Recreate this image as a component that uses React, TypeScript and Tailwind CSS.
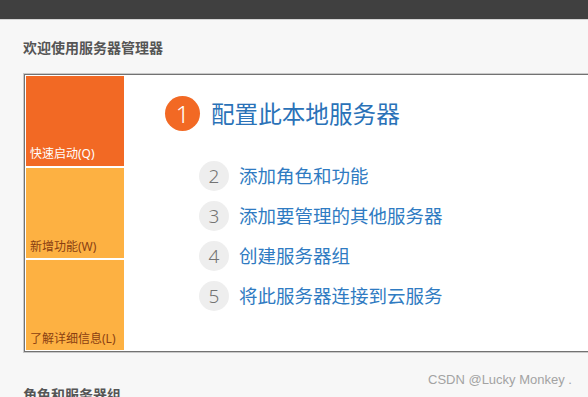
import React from "react";

const items = [
  { n: "2", t: "添加角色和功能" },
  { n: "3", t: "添加要管理的其他服务器" },
  { n: "4", t: "创建服务器组" },
  { n: "5", t: "将此服务器连接到云服务" },
];

export default function App() {
  return (
    <div
      className="relative w-[588px] h-[397px] overflow-hidden bg-[#f7f7f7]"
      style={{ fontFamily: '"Noto Sans", "Noto Sans CJK SC", sans-serif' }}
    >
      <div className="h-[20px] bg-[#404040] border-b border-[#d4d4d4]" />
      <div className="pl-[23px]">
        <h1 className="mt-[18px] h-[20px] leading-[20px] text-[14px] font-bold text-[#555555]">
          欢迎使用服务器管理器
        </h1>
        <div className="mt-[15px] w-[620px] border border-[#c9c9c9]">
          <div className="border border-[#727272] bg-white p-px flex">
            <div className="w-[98px] flex flex-col gap-[2px]">
              <div className="h-[90px] bg-[#f26924] flex items-end px-[4px] pb-[4px]">
                <span className="text-[12px] leading-[16px] text-white">快速启动(Q)</span>
              </div>
              <div className="h-[90px] bg-[#fdb142] flex items-end px-[4px] pb-[3px]">
                <span className="text-[12px] leading-[16px] text-[#8a3f12]">新增功能(W)</span>
              </div>
              <div className="h-[90px] bg-[#fdb142] flex items-end px-[4px] pb-[3px]">
                <span className="text-[12px] leading-[16px] text-[#8a3f12]">了解详细信息(L)</span>
              </div>
            </div>
            <div className="pl-[41px] pt-[20px]">
              <div className="flex items-center gap-[11px]">
                <div className="w-[35px] h-[35px] rounded-full bg-[#f26924] flex items-center justify-center text-white text-[24px] font-light leading-none">
                  1
                </div>
                <div className="text-[23.6px] leading-[30px] text-[#2a72b8]">配置此本地服务器</div>
              </div>
              <div className="ml-[34px] mt-[30px] flex flex-col gap-[10px]">
                {items.map((it) => (
                  <div key={it.n} className="flex items-center gap-[10px]">
                    <div className="w-[30px] h-[30px] rounded-full bg-[#eeeeee] flex items-center justify-center text-[#737373] text-[19px] font-light leading-none">
                      {it.n}
                    </div>
                    <div className="text-[18.5px] leading-[26px] text-[#2f7bc2]">{it.t}</div>
                  </div>
                ))}
              </div>
            </div>
          </div>
        </div>
        <h2 className="mt-[32px] h-[20px] leading-[20px] text-[14px] font-bold text-[#555555]">
          角色和服务器组
        </h2>
      </div>
      <div
        className="absolute left-[428px] top-[372px] text-[13px] leading-[16px] text-[#a3a3a3]"
        style={{ fontFamily: '"Liberation Sans", sans-serif' }}
      >
        CSDN @Lucky Monkey .
      </div>
    </div>
  );
}
